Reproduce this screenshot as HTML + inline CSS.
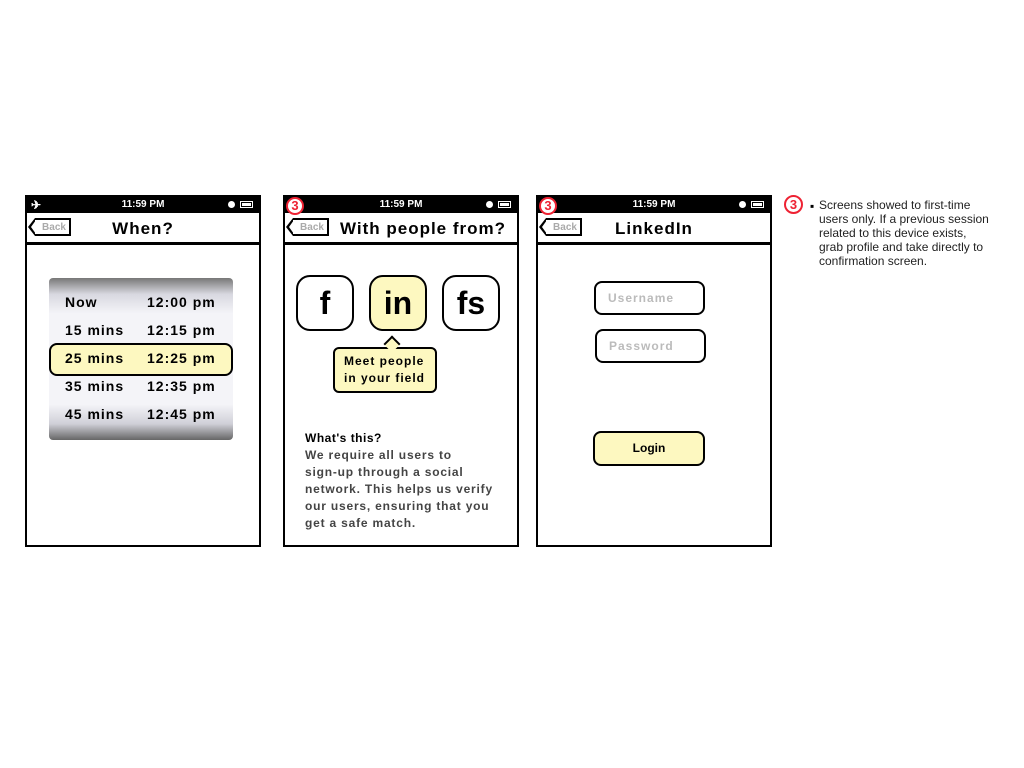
<!DOCTYPE html>
<html><head><meta charset="utf-8"><style>
*{margin:0;padding:0;box-sizing:border-box}
body{width:1024px;height:768px;background:#fff;position:relative;font-family:"Liberation Sans",sans-serif;overflow:hidden}
.a{position:absolute}
.ph{position:absolute;top:195px;width:236px;height:352px;border:2px solid #000;background:#fff}
.sb{position:absolute;left:0;top:0;right:0;height:16px;background:#000;color:#fff;font-size:10px;font-weight:bold;text-align:center;line-height:16px}
.hd{position:absolute;left:0;right:0;top:16px;height:32px;border-bottom:3px solid #000;text-align:center;font-weight:bold;font-size:17px;line-height:31px;letter-spacing:1px}
.back{position:absolute;left:8px;top:5px;width:36px;height:18px;border:2px solid #000;border-left:none;font-size:10px;color:#aaa;line-height:16px;text-align:center;padding-left:4px;font-weight:bold;letter-spacing:0}
.back:before{content:"";position:absolute;left:-7px;top:-2px;border-top:9px solid transparent;border-bottom:9px solid transparent;border-right:7px solid #000}
.back:after{content:"";position:absolute;left:-4px;top:0;border-top:7px solid transparent;border-bottom:7px solid transparent;border-right:5px solid #fff}
.bat{position:absolute;right:6px;top:4px;width:13px;height:7px;border:1px solid #fff}
.bat:after{content:"";position:absolute;left:1px;top:1px;width:9px;height:3px;background:#fff}
.dot{position:absolute;right:24px;top:4px;width:7px;height:7px;border-radius:50%;background:#fff}
.n3{position:absolute;left:1px;top:0;width:18px;height:18px;border-radius:50%;border:2px solid #e23;background:#fff;color:#e23;font-weight:bold;font-size:13px;line-height:14px;text-align:center}
.row{position:absolute;left:15px;width:150px;font-weight:bold;font-size:14px;letter-spacing:1px}
.row span{position:absolute;left:82px;white-space:nowrap}
.sq{position:absolute;top:78px;width:58px;height:56px;border:2px solid #000;border-radius:14px;font-weight:bold;font-size:32px;text-align:center;line-height:52px}
.fld{position:absolute;width:111px;height:34px;border:2px solid #000;border-radius:8px;color:#bbb;font-weight:bold;font-size:12px;line-height:30px;padding-left:12px;letter-spacing:1px}
</style></head><body>

<div class="ph" style="left:25px">
 <div class="sb">11:59 PM<span class="a" style="left:4px;top:0;font-size:12px">✈</span><div class="dot"></div><div class="bat"></div></div>
 <div class="hd"><div class="back">Back</div>When?</div>
 <div class="a" style="left:22px;top:81px;width:184px;height:162px;border-radius:4px;background:linear-gradient(#777 0%,#d8d8e0 10%,#f4f4f8 22%,#f4f4f8 78%,#d0d0d8 90%,#666 100%)"></div>
 <div class="a" style="left:22px;top:146px;width:184px;height:33px;border:2px solid #000;border-radius:8px;background:#fdf8c0"></div>
 <div class="row" style="left:38px;top:97px">Now<span>12:00 pm</span></div>
 <div class="row" style="left:38px;top:125px">15 mins<span>12:15 pm</span></div>
 <div class="row" style="left:38px;top:153px">25 mins<span>12:25 pm</span></div>
 <div class="row" style="left:38px;top:181px">35 mins<span>12:35 pm</span></div>
 <div class="row" style="left:38px;top:209px">45 mins<span>12:45 pm</span></div>
</div>

<div class="ph" style="left:283px">
 <div class="sb">11:59 PM<div class="dot"></div><div class="bat"></div></div>
 <div class="n3">3</div>
 <div class="hd" style="padding-left:44px;font-size:17px;letter-spacing:1px"><div class="back">Back</div>With people from?</div>
 <div class="sq" style="left:11px">f</div>
 <div class="sq" style="left:84px;background:#fdf8c0">in</div>
 <div class="sq" style="left:157px">fs</div>
 <div class="a" style="left:48px;top:150px;width:104px;height:46px;border:2px solid #000;border-radius:6px;background:#fdf8c0;font-weight:bold;font-size:12px;line-height:17px;padding:4px 0 0 9px;letter-spacing:1px">Meet people<br>in your field</div>
 <div class="a" style="left:101px;top:141px;width:12px;height:12px;background:#fdf8c0;border-left:2px solid #000;border-top:2px solid #000;transform:rotate(45deg)"></div>
 <div class="a" style="left:20px;top:234px;font-weight:bold;font-size:12px;letter-spacing:0.5px">What's this?</div>
 <div class="a" style="left:20px;top:250px;white-space:nowrap;font-size:12px;line-height:17px;color:#444;font-weight:bold;letter-spacing:0.8px">We require all users to<br>sign-up through a social<br>network. This helps us verify<br>our users, ensuring that you<br>get a safe match.</div>
</div>

<div class="ph" style="left:536px">
 <div class="sb">11:59 PM<div class="dot"></div><div class="bat"></div></div>
 <div class="n3">3</div>
 <div class="hd"><div class="back">Back</div>LinkedIn</div>
 <div class="fld" style="left:56px;top:84px">Username</div>
 <div class="fld" style="left:57px;top:132px">Password</div>
 <div class="a" style="left:55px;top:234px;width:112px;height:35px;border:2px solid #000;border-radius:8px;background:#fdf8c0;font-weight:bold;font-size:12px;text-align:center;line-height:31px">Login</div>
</div>

<div class="a" style="left:784px;top:195px;width:19px;height:19px;border-radius:50%;border:2px solid #e23;color:#e23;font-weight:bold;font-size:13px;line-height:15px;text-align:center">3</div>
<div class="a" style="left:810px;top:199px;font-size:12px">▪</div>
<div class="a" style="left:819px;top:198px;white-space:nowrap;font-size:12px;line-height:14px;color:#222">Screens showed to first-time<br>users only. If a previous session<br>related to this device exists,<br>grab profile and take directly to<br>confirmation screen.</div>
</body></html>
